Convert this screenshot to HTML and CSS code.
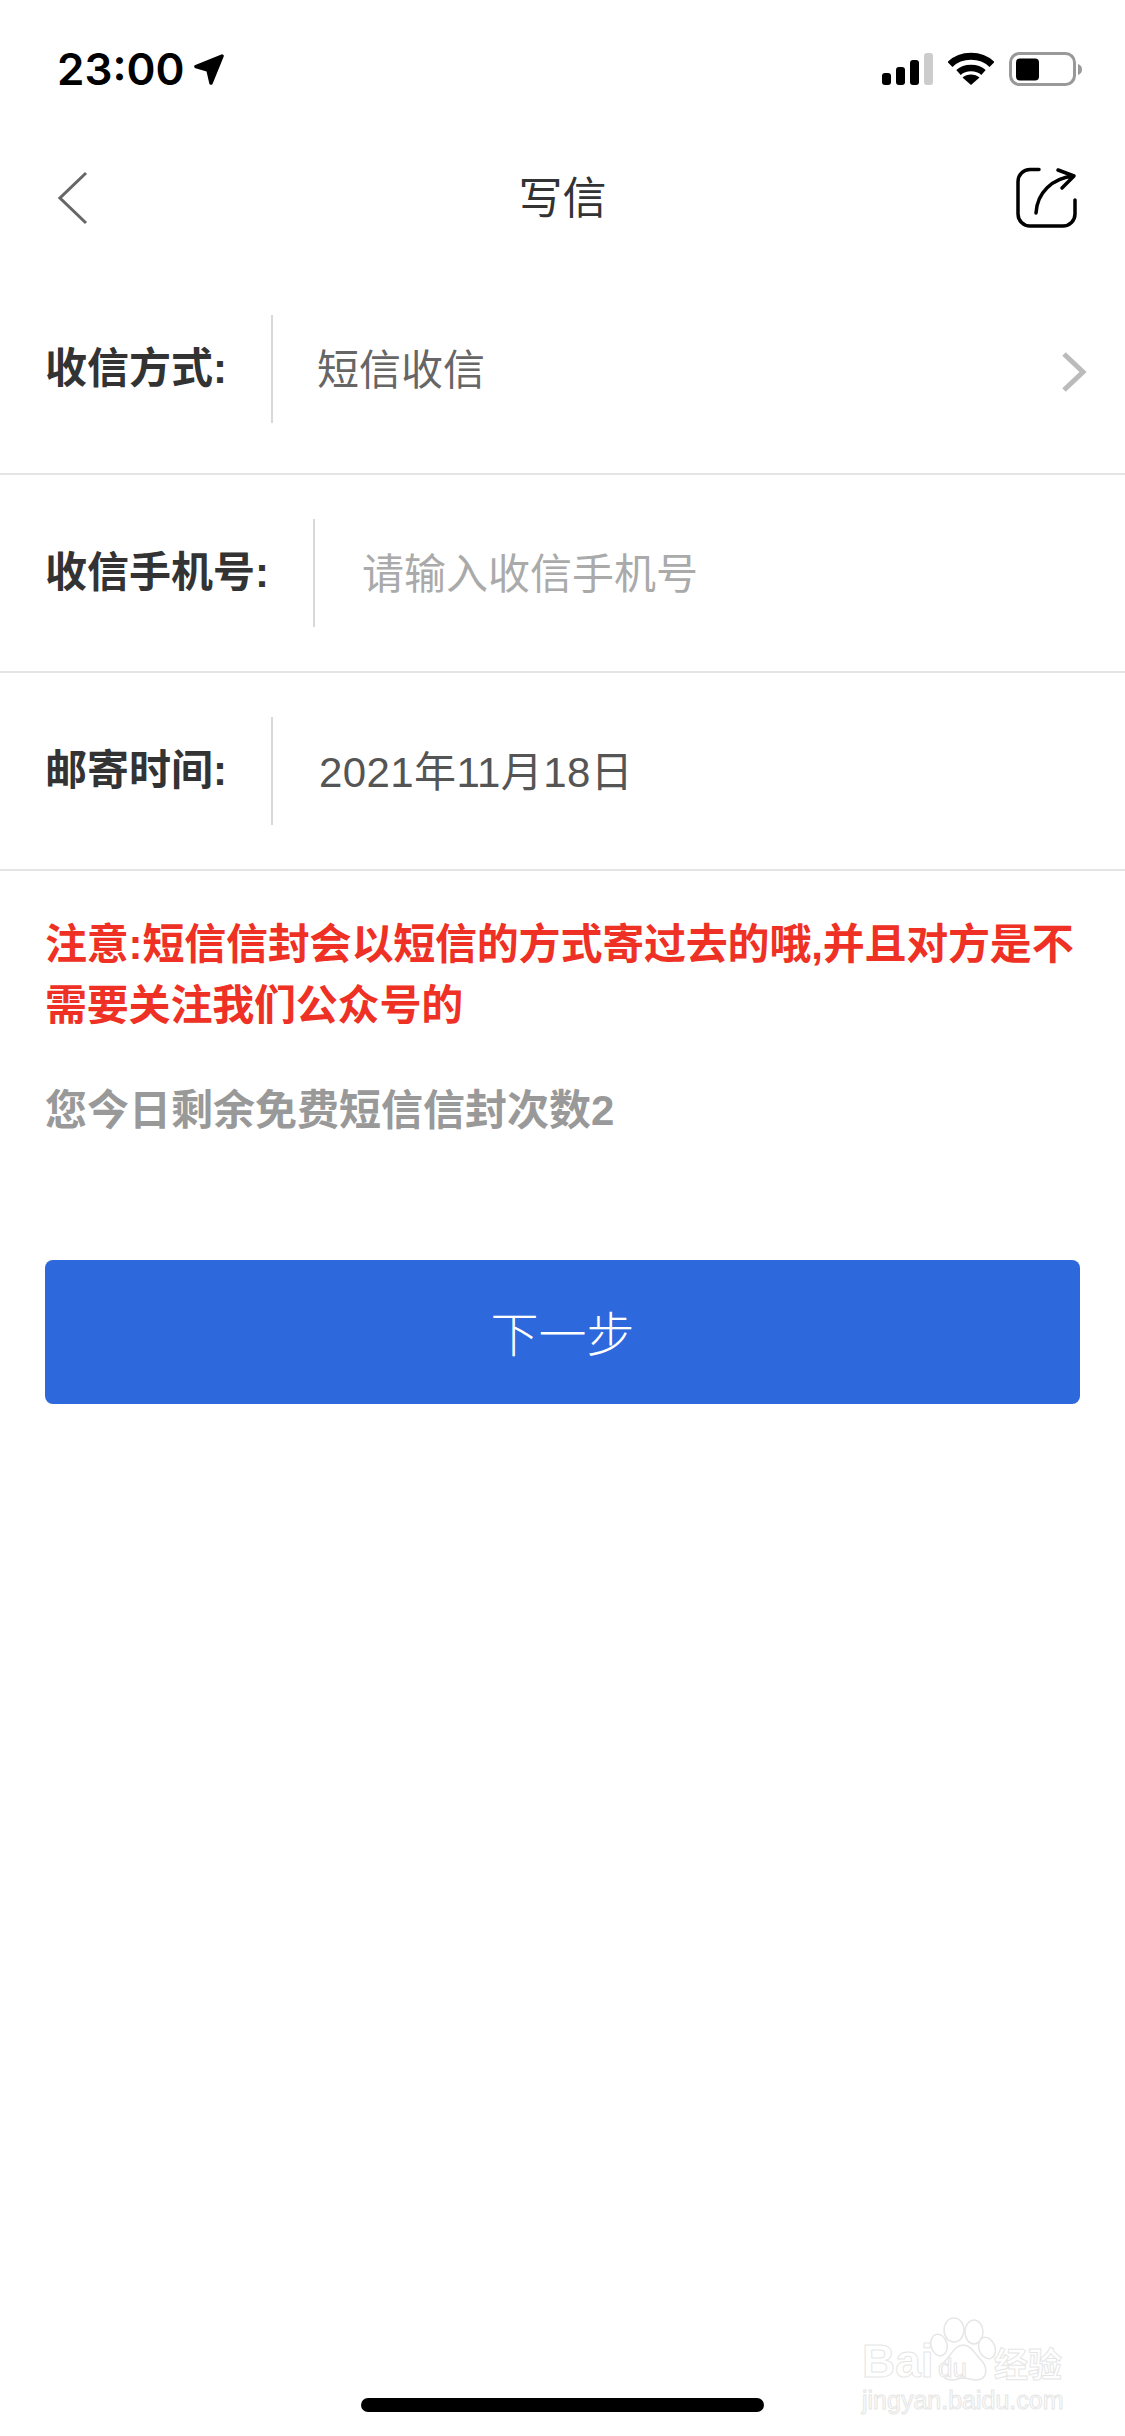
FILE: index.html
```html
<!DOCTYPE html>
<html lang="zh-CN">
<head>
  <meta charset="UTF-8" />
  <meta name="viewport" content="width=device-width, initial-scale=1.0"/>
  <title>写信</title>
  <link rel="stylesheet" href="styles.css">
</head>
<body>
  <div class="page">
    <div class="status-bar">
      <div class="status-left">
        <span class="time">23:00</span>
        <svg class="icon-location" width="32" height="32" viewBox="0 0 32 32">
          <path d="M29 3 3 13.500 15 17 18 30Z" fill="#000" stroke="#000" stroke-width="3.500" stroke-linejoin="round"/>
        </svg>
      </div>
      <div class="status-right">
        <svg width="52" height="34" viewBox="0 0 52 34">
          <rect x="0" y="21" width="9" height="12" rx="3" fill="#000"/>
          <rect x="14" y="15" width="9" height="18" rx="3" fill="#000"/>
          <rect x="28" y="8" width="9" height="25" rx="3" fill="#000"/>
          <rect x="42" y="1" width="9" height="32" rx="3" fill="#ccc"/>
        </svg>
        <svg width="46" height="34" viewBox="0 0 46 34">
          <path d="M2 12.500C13 1.500 33 1.500 44 12.500" fill="none" stroke="#000" stroke-width="7"/>
          <path d="M10.500 20.500C17 14.500 29 14.500 35.500 20.500" fill="none" stroke="#000" stroke-width="6.500"/>
          <path d="M23 33 14.500 25.500C19 21.500 27 21.500 31.500 25.500Z" fill="#000"/>
        </svg>
        <svg width="74" height="34" viewBox="0 0 74 34">
          <rect x="1.500" y="1.500" width="64" height="31" rx="9" fill="none" stroke="#999" stroke-width="3"/>
          <rect x="7" y="6.500" width="23" height="22" rx="4" fill="#000"/>
          <path d="M69 12C72 13 73 15 73 17.500 73 20 72 22 69 23Z" fill="#999"/>
        </svg>
      </div>
    </div>

    <div class="nav">
      <svg class="nav-back" width="30" height="54" viewBox="0 0 30 54">
        <path d="M28 2 2 27 28 52" fill="none" stroke="#666" stroke-width="3"/>
      </svg>
      <h1 class="nav-title">写信</h1>
      <svg class="nav-share" width="62" height="62" viewBox="0 0 62 62">
        <path d="M23 2.500H14A12 12 0 0 0 2 14.500V47A12 12 0 0 0 14 59H47A12 12 0 0 0 59 47V33" fill="none" stroke="#000" stroke-width="3.500" stroke-linecap="round"/>
        <path d="M20 46C21 26 36 11 58 9M42 3 58 9 46 21" fill="none" stroke="#000" stroke-width="3.500" stroke-linecap="round" stroke-linejoin="round"/>
      </svg>
    </div>

    <div class="form">
      <div class="row row-first">
        <span class="row-label">收信方式:</span>
        <span class="row-value">短信收信</span>
        <svg class="row-arrow" width="26" height="42" viewBox="0 0 26 42">
          <path d="M3 3 22 21 3 39" fill="none" stroke="#bbb" stroke-width="5"/>
        </svg>
      </div>
      <div class="row">
        <span class="row-label">收信手机号:</span>
        <span class="row-value placeholder">请输入收信手机号</span>
      </div>
      <div class="row">
        <span class="row-label">邮寄时间:</span>
        <span class="row-value date">2021年11月18日</span>
      </div>
    </div>

    <p class="notice">注意:短信信封会以短信的方式寄过去的哦,并且对方是不需要关注我们公众号的</p>
    <p class="remain">您今日剩余免费短信信封次数2</p>

    <button class="next-btn">下一步</button>

    <div class="home-bar"></div>

    <div class="watermark">
      <svg class="watermark-paw" width="66" height="66" viewBox="0 0 66 66">
        <g fill="#fff" stroke="#e6e6e6" stroke-width="1.500">
          <ellipse cx="24" cy="13" rx="10" ry="12"/>
          <ellipse cx="44" cy="15" rx="9" ry="12"/>
          <ellipse cx="9" cy="28" rx="8" ry="11" transform="rotate(-15 9 28)"/>
          <ellipse cx="57" cy="31" rx="8" ry="11" transform="rotate(-20 57 31)"/>
          <path d="M33 28C25 28 22 37 16 43 9 50 10 63 22 63 27 63 29 61 33 61 38 61 41 63 46 63 58 63 58 50 51 43 45 37 41 28 33 28Z"/>
        </g>
      </svg>
      <div class="watermark-logo"><span class="watermark-bai">Bai</span><span class="watermark-du">du</span><span class="watermark-jy">经验</span></div>
      <div class="watermark-url">jingyan.baidu.com</div>
    </div>
  </div>
</body>
</html>
```

FILE: styles.css
```css
:root {
  --text: #333333;
  --value: #666666;
  --line: #e4e4e4;
  --divider: #d8d8d8;
  --accent: #2d68dc;
  --danger: #ee3124;
  --muted: #999999;
}

* {
  box-sizing: border-box;
}

body {
  margin: 0;
  background: #ffffff;
  color: var(--text);
  font-family: "Liberation Sans", "Noto Sans CJK SC", sans-serif;
}

.page {
  position: relative;
  display: flex;
  flex-direction: column;
  height: 2436px;
  overflow: hidden;
}

/* Status bar */
.status-bar {
  display: flex;
  justify-content: space-between;
  align-items: flex-start;
  height: 122px;
  padding: 52px 42px 0 57px;
}

.status-left {
  display: flex;
  align-items: center;
  gap: 8px;
}

.time {
  font-family: Inter, sans-serif;
  font-size: 44px;
  font-weight: 600;
  line-height: 34px;
  color: #000;
}

.status-right {
  display: flex;
  gap: 15px;
}

.status-right svg:first-child {
  margin-right: -1px;
}

/* Nav */
.nav {
  display: grid;
  grid-template-columns: 1fr auto 1fr;
  align-items: center;
  height: 149px;
  padding: 2px 47px 0;
}

.nav-back {
  margin-left: 11px;
}

.nav-title {
  margin: -6px 0 0;
  font-size: 44px;
  font-weight: 400;
  color: var(--text);
}

.nav-share {
  justify-self: end;
}

/* Form rows */
.row {
  display: flex;
  align-items: center;
  padding: 44px 0 44px 45px;
  border-bottom: 2px solid var(--line);
}

.row-first {
  padding-bottom: 50px;
}

.row-label {
  padding-right: 44px;
  font-size: 42px;
  font-weight: 700;
  line-height: 108px;
}

.row-value {
  height: 108px;
  padding-left: 44px;
  border-left: 2px solid var(--divider);
  font-size: 42px;
  line-height: 111px;
  color: var(--value);
}

.row-value.placeholder {
  padding-left: 47px;
  color: #aaaaaa;
}

.row-value.date {
  padding-left: 46px;
  letter-spacing: 0.4px;
  color: #555555;
}

.row-arrow {
  margin: 6px 38px 0 auto;
}

/* Texts under the form */
.notice {
  margin: 43px 45px 0;
  font-size: 42px;
  font-weight: 700;
  line-height: 61px;
  letter-spacing: -0.2px;
  color: var(--danger);
}

.remain {
  margin: 44px 45px 0;
  font-size: 42px;
  font-weight: 700;
  line-height: 61px;
  color: var(--muted);
}

.next-btn {
  flex: none;
  height: 144px;
  margin: 119px 45px 0;
  padding: 0 0 2px;
  background: var(--accent);
  border: none;
  border-radius: 8px;
  font-family: inherit;
  font-size: 48px;
  font-weight: 300;
  color: #ffffff;
}

.home-bar {
  flex: none;
  width: 403px;
  height: 14px;
  margin: auto auto 24px;
  background: #000;
  border-radius: 7px;
}

/* Watermark */
.watermark {
  position: absolute;
  left: 862px;
  top: 2317px;
  width: 204px;
  height: 96px;
}

.watermark-paw {
  position: absolute;
  left: 68px;
  top: 0;
}

.watermark-logo {
  position: absolute;
  left: 0;
  top: 22px;
  display: flex;
  align-items: baseline;
  font-weight: 700;
  line-height: 44px;
  color: #fff;
  -webkit-text-stroke: 1px #e6e6e6;
}

.watermark-bai {
  font-size: 46px;
  width: 76px;
}

.watermark-du {
  width: 56px;
  font-size: 26px;
  font-weight: 400;
}

.watermark-jy {
  font-size: 34px;
}

.watermark-url {
  position: absolute;
  left: 0;
  top: 68px;
  font-size: 25px;
  line-height: 30px;
  white-space: nowrap;
  color: #fff;
  -webkit-text-stroke: 1px #e6e6e6;
}
```
